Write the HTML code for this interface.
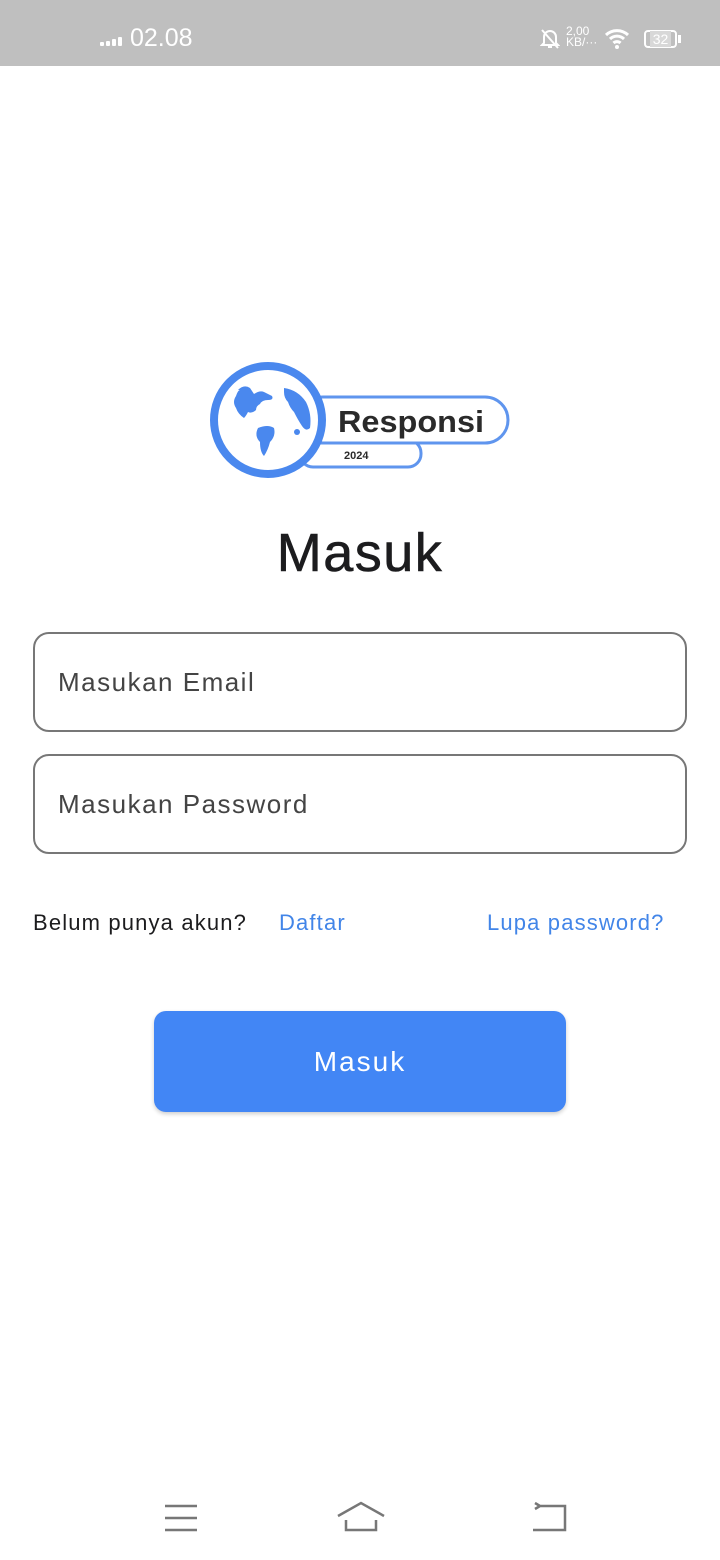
<!DOCTYPE html>
<html><head><meta charset="utf-8"><style>
*{margin:0;padding:0;box-sizing:border-box}
body{width:720px;height:1560px;background:#fff;position:relative;overflow:hidden;font-family:"Liberation Sans",sans-serif}
.sb{position:absolute;left:0;top:0;width:720px;height:66px;background:#bfbfbf;color:#fff}
.abs{position:absolute}
.inp{position:absolute;left:33px;width:654px;height:100px;border:2px solid #777;border-radius:16px;font-size:26px;color:#444;padding-left:23px;line-height:96px;letter-spacing:1.5px}
.lk{font-size:22px;letter-spacing:1.15px}
</style></head><body>
<div class="sb">
  <div class="abs" style="left:100px;top:36px;width:22px;height:12px">
    <div class="abs" style="left:0;top:6px;width:4px;height:4px;background:#fff;border-radius:1px"></div>
    <div class="abs" style="left:6px;top:5px;width:4px;height:5px;background:#fff;border-radius:1px"></div>
    <div class="abs" style="left:12px;top:3px;width:4px;height:7px;background:#fff;border-radius:1px"></div>
    <div class="abs" style="left:18px;top:1px;width:4px;height:9px;background:#fff;border-radius:1px"></div>
  </div>
  <div class="abs" style="left:130px;top:24px;font-size:25px">02.08</div>
  <svg class="abs" style="left:540px;top:28px" width="20" height="22" viewBox="0 0 20 22"><path d="M4 15 V9 a6 6 0 0 1 12 0 V15 L18 17 H2 Z M8 19 h4" fill="none" stroke="#fff" stroke-width="2"/><path d="M2 2 L18 20" stroke="#fff" stroke-width="2"/></svg>
  <div class="abs" style="left:566px;top:26px;font-size:12px;line-height:11px">2,00<br>KB/···</div>
  <svg class="abs" style="left:604px;top:28px" width="28" height="22" viewBox="0 0 28 22"><path d="M2 7 a16 16 0 0 1 22 0 M6 11 a10 10 0 0 1 14 0 M9.5 15 a5 5 0 0 1 7 0" fill="none" stroke="#fff" stroke-width="3"/><circle cx="13" cy="19" r="2" fill="#fff"/></svg>
  <div class="abs" style="left:644px;top:30px;width:33px;height:18px;border:2px solid #fff;border-radius:4px;font-size:14px;line-height:14px;text-align:center;color:#fff"><span style="background:#d8d8d8;color:#fff;padding:0 3px">32</span></div>
  <div class="abs" style="left:678px;top:35px;width:3px;height:8px;background:#fff"></div>
</div>

<svg class="abs" style="left:205px;top:358px" width="310" height="124" viewBox="205 358 310 124">
  <rect x="300" y="440" width="121" height="27" rx="13" fill="#fff" stroke="#5f95ee" stroke-width="3"/>
  <rect x="300" y="397" width="208" height="46" rx="23" fill="#fff" stroke="#5f95ee" stroke-width="3"/>
  <circle cx="268" cy="420" r="54" fill="#fff" stroke="#4a88ee" stroke-width="8"/>
  <path d="M238 390 q6-6 12-2 l4 6 q6-4 10-2 l8 4 q2 4-4 4 q-6 0-8 4 q-4 2-4 6 q-4 4-8 2 q-2 4-4 6 q-6-4-8-10 q-4-6 0-12 q2-6 4-6z" fill="#4a88ee"/>
  <path d="M284 388 q14 2 22 14 q6 12 4 26 q-4 4-8-2 q-4-6-8-14 q-4-4-6-10 q-4-4-4-10z" fill="#4a88ee"/>
  <path d="M258 428 q10-4 16 0 q2 8-4 14 q-2 8-6 14 q-4-4-4-14 q-6-6-2-14z" fill="#4a88ee"/>
  <circle cx="297" cy="432" r="3" fill="#4a88ee"/>
  <text x="338" y="432" font-family="Liberation Sans Narrow, Liberation Sans, sans-serif" font-weight="bold" font-size="31" fill="#2a2a2a" textLength="146" lengthAdjust="spacingAndGlyphs">Responsi</text>
  <text x="344" y="459" font-family="Liberation Sans, sans-serif" font-weight="bold" font-size="11" fill="#2a2a2a">2024</text>
</svg>

<div class="abs" style="left:0;width:720px;top:518px;text-align:center;font-size:54px;color:#1c1c1e;line-height:70px;letter-spacing:1.5px;-webkit-text-stroke:0.6px #1c1c1e">Masuk</div>

<div class="inp" style="top:632px">Masukan Email</div>
<div class="inp" style="top:754px">Masukan Password</div>

<div class="abs lk" style="left:33px;top:910px;color:#1c1c1e">Belum punya akun?</div>
<div class="abs lk" style="left:279px;top:910px;color:#4285e8">Daftar</div>
<div class="abs lk" style="left:487px;top:910px;color:#4285e8">Lupa password?</div>

<div class="abs" style="left:154px;top:1011px;width:412px;height:101px;background:#4286f5;border-radius:12px;box-shadow:0 2px 4px rgba(0,0,0,.2);color:#fff;font-size:28px;text-align:center;line-height:101px;letter-spacing:2px">Masuk</div>

<svg class="abs" style="left:160px;top:1498px" width="420" height="40" viewBox="160 1498 420 40">
  <path d="M165 1506 h32 M165 1518 h32 M165 1530 h32" stroke="#777" stroke-width="2.5"/>
  <path d="M338 1516 L361 1503 L384 1516 M346 1520 v10 h30 v-10" fill="none" stroke="#777" stroke-width="2.5"/>
  <path d="M540 1506 h25 v24 h-32 M540 1506 l-5 -3 M540 1506 l-5 3" fill="none" stroke="#777" stroke-width="2.5"/>
</svg>
</body></html>
